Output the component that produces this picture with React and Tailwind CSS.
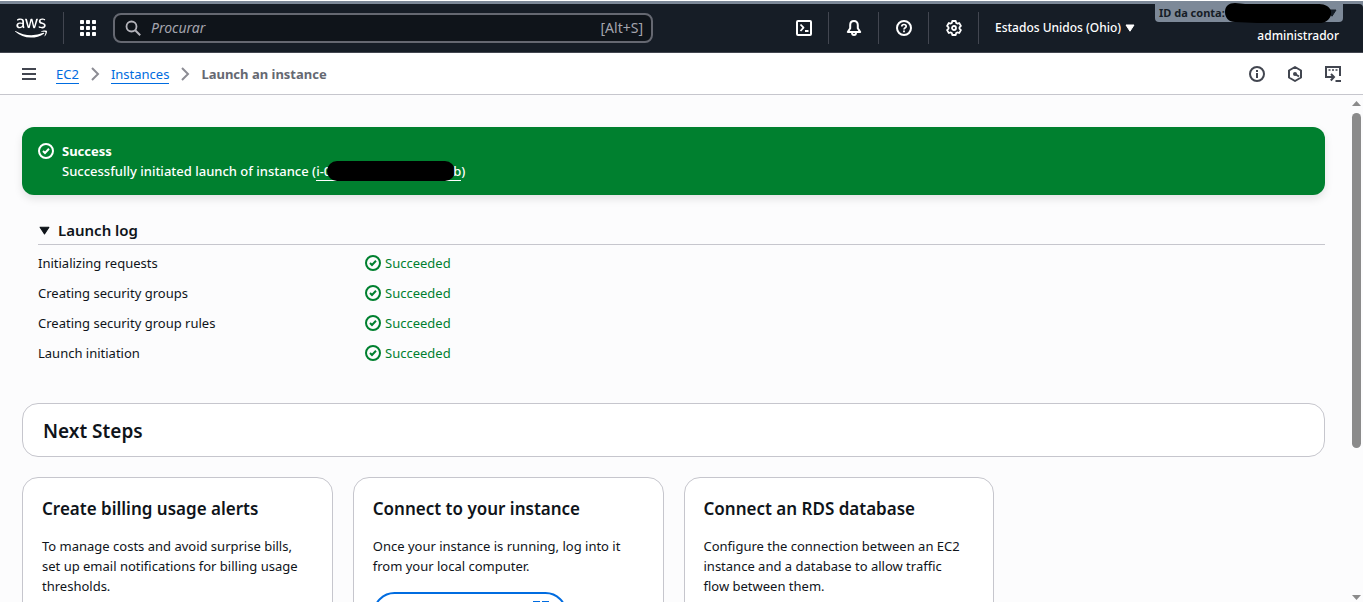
import React from "react";
import { FaAws } from "react-icons/fa";

function Icon({ children, className = "size-4" }) {
  return (
    <svg
      viewBox="0 0 16 16"
      fill="none"
      stroke="currentColor"
      strokeWidth="2"
      strokeLinejoin="round"
      aria-hidden="true"
      className={`${className} shrink-0`}
    >
      {children}
    </svg>
  );
}

const CheckIcon = () => (
  <Icon>
    <circle cx="8" cy="8" r="7" />
    <path d="m5 8 2 2 4-4.2" strokeLinejoin="miter" />
  </Icon>
);

const Caret = ({ className }) => (
  <svg viewBox="0 0 10 8" fill="currentColor" stroke="currentColor" strokeLinejoin="round" aria-hidden="true" className={className}>
    <path d="M1 1h8L5 7.2z" />
  </svg>
);

const ScrollArrow = ({ className }) => (
  <svg viewBox="0 0 9 5" fill="currentColor" aria-hidden="true" className={`h-[5px] w-[9px] ${className}`}>
    <path d="M0 0h9L4.5 5z" />
  </svg>
);

const Chevron = () => (
  <Icon className="size-4 text-[#8c8c94]">
    <path d="m5 2 6 6-6 6" strokeLinejoin="miter" />
  </Icon>
);

const GridIcon = () => (
  <svg viewBox="0 0 16 16" fill="currentColor" aria-hidden="true" className="size-4">
    {[0, 6, 12].map((y) =>
      [0, 6, 12].map((x) => <rect key={`${x}-${y}`} x={x} y={y} width="4" height="4" rx="0.8" />)
    )}
  </svg>
);

const tools = [
  {
    label: "CloudShell",
    icon: (
      <Icon>
        <rect x="1" y="1" width="14" height="14" rx="1" />
        <path d="m4.5 4.5 3 3.2-3 3.3M9 11h3.5" strokeWidth="1.8" />
      </Icon>
    ),
  },
  {
    label: "Notificações",
    icon: (
      <Icon>
        <path d="M8 1C5.6 1 4.2 2.7 4.2 5v3.2L1.8 12h12.4L11.8 8.2V5C11.8 2.7 10.4 1 8 1Z" />
        <path d="M6 12.5c0 1.7 1 2.5 2 2.5s2-.8 2-2.5" />
      </Icon>
    ),
  },
  {
    label: "Ajuda",
    icon: (
      <Icon>
        <circle cx="8" cy="8" r="7" />
        <path d="M5.8 6.5C5.8 5.2 6.7 4.5 8 4.5s2.2.8 2.2 1.9C10.2 7.8 8 7.8 8 9.6" strokeWidth="1.7" />
        <path d="M8 10.6v1.7" strokeWidth="1.8" />
      </Icon>
    ),
  },
  {
    label: "Configurações",
    icon: (
      <Icon>
        <path d="M6.3 1h3.4l.5 2 1 .6 2-.6 1.7 2.9-1.4 1.4v1.400l1.400 1.400-1.700 2.900-2-.6-1 .6-.5 2H6.3l-.5-2-1-.6-2 .6-1.700-2.900 1.400-1.400V7.300L1.100 5.900 2.800 3l2 .6 1-.6z" strokeWidth="1.8" />
        <circle cx="8" cy="8" r="2" strokeWidth="1.8" />
      </Icon>
    ),
  },
];

const steps = ["Initializing requests", "Creating security groups", "Creating security group rules", "Launch initiation"];

const cards = [
  {
    title: "Create billing usage alerts",
    text: "To manage costs and avoid surprise bills, set up email notifications for billing usage thresholds.",
  },
  {
    title: "Connect to your instance",
    text: "Once your instance is running, log into it from your local computer.",
    action: "Connect to instance",
  },
  {
    title: "Connect an RDS database",
    text: "Configure the connection between an EC2 instance and a database to allow traffic flow between them.",
  },
];

function TopBar() {
  return (
    <header className="shrink-0 border-t border-white bg-[#7d8998] pt-[3px] text-white">
      <div className="flex h-[49px] items-center rounded-tr border-b border-[#424650] bg-[#161d26]">
        <a href="#home" aria-label="AWS" className="flex h-8 w-16 shrink-0 items-center border-r border-[#424650] pl-[15px]">
          <FaAws className="h-[26px] w-8" />
        </a>
        <button type="button" aria-label="Serviços" className="flex h-8 w-[49px] shrink-0 items-center pl-4">
          <GridIcon />
        </button>
        <label className="flex h-[30px] w-[540px] min-w-0 items-center gap-2 rounded-lg border-2 border-[#656871] bg-[#0f141a] px-2 text-[#b4b4bb]">
          <span className="flex w-5 justify-center">
            <Icon>
              <circle cx="6.5" cy="6.5" r="5" strokeWidth="1.8" />
              <path d="m10.2 10.2 5 5" />
            </Icon>
          </span>
          <input
            type="search"
            placeholder="Procurar"
            aria-label="Procurar"
            className="min-w-0 flex-1 bg-transparent text-sm outline-none placeholder:text-[#a4a4ad] placeholder:italic"
          />
          <span className="text-sm text-[#a4a4ad]">[Alt+S]</span>
        </label>
        <div className="ml-auto flex shrink-0 items-center">
          {tools.map((tool) => (
            <button
              key={tool.label}
              type="button"
              aria-label={tool.label}
              className="flex h-8 w-[50px] items-center justify-center border-r border-[#424650]"
            >
              {tool.icon}
            </button>
          ))}
          <button type="button" className="flex w-44 items-center gap-1 pl-4 text-xs font-medium">
            Estados Unidos (Ohio)
            <Caret className="h-2 w-2.5" />
          </button>
        </div>
        <button type="button" className="mr-5 flex w-[188px] shrink-0 flex-col items-end self-start text-xs">
          <span className="flex h-[18px] w-full items-center rounded-b bg-[#7d8998] pl-1 text-[11px] font-bold text-[#161d26]">
            ID da conta:
            <span className="flex-1">
              <svg viewBox="0 0 106 22" fill="#000" preserveAspectRatio="none" aria-hidden="true" className="relative -top-0.5 -mb-1 h-[22px] w-full">
                <path d="M0 10C0 4 4 1 10 1l10 1h74c7 0 12 4 12 9s-5 10-12 10l-62 0-22-1C4 20 0 16 0 10Z" />
              </svg>
            </span>
            <Caret className="mr-1.5 -ml-1 h-2 w-2.5" />
          </span>
          <span className="mt-1 mr-1 text-xs leading-5 font-medium">administrador</span>
        </button>
      </div>
    </header>
  );
}

function Breadcrumbs() {
  return (
    <div className="flex h-[42px] shrink-0 items-center border-b border-[#c6c6cd] bg-white pr-[22px] pl-[21px] text-[#424650]">
      <button type="button" aria-label="Open menu" className="mr-[19px]">
        <Icon>
          <path d="M1 3h14M1 8h14M1 13h14" />
        </Icon>
      </button>
      <nav aria-label="Breadcrumb" className="flex items-center gap-2 text-[13px] leading-5">
        <a href="#ec2" className="h-5 border-b border-[#006ce0] text-[#006ce0]">EC2</a>
        <Chevron />
        <a href="#instances" className="h-5 border-b border-[#006ce0] text-[#006ce0]">Instances</a>
        <Chevron />
        <span className="font-bold text-[#656871]">Launch an instance</span>
      </nav>
      <div className="ml-auto flex gap-[22px]">
        <button type="button" aria-label="Info">
          <Icon>
            <circle cx="8" cy="8" r="7" />
            <path d="M8 4v2M8 7v5" />
          </Icon>
        </button>
        <button type="button" aria-label="Amazon Q">
          <Icon>
            <path d="m8 1 6 3.500v7L8 15l-6-3.500v-7z" />
            <circle cx="8" cy="8" r="2" fill="currentColor" stroke="none" />
            <path d="m8 8 4 2.500" />
          </Icon>
        </button>
        <button type="button" aria-label="Console">
          <Icon>
            <path d="M4 11H1V1h14v9" strokeLinejoin="miter" />
            <path d="M3.500 4h2M7 4h2M10.500 4h2" strokeWidth="1.600" />
            <path d="M4 11h4.500M6 8l3 3-3.200 3.500M10.500 15H16" strokeLinejoin="miter" />
          </Icon>
        </button>
      </div>
    </div>
  );
}

function SuccessBanner() {
  return (
    <section
      role="status"
      className="flex gap-2 rounded-xl bg-[#00802f] px-4 py-3.5 text-[13px] leading-5 text-white shadow-[0_4px_8px_rgba(0,7,22,0.1)]"
    >
      <span className="mt-0.5">
        <CheckIcon />
      </span>
      <div>
        <h2 className="font-bold">Success</h2>
        <p className="flex font-medium">
          <span className="whitespace-pre">Successfully initiated launch of instance (</span>
          <a href="#instance" className="flex h-5 border-b border-white">
            i-0
            <span className="-mr-0.5 -ml-1 h-5 w-[128px] rounded-full bg-black" />
            b
          </a>
          )
        </p>
      </div>
    </section>
  );
}

function LaunchLog() {
  return (
    <section className="mt-[25px] pl-4">
      <h2 className="border-b border-[#c6c6cd] pb-1">
        <button type="button" aria-expanded="true" className="flex items-center gap-2 text-[15px] leading-5 font-semibold">
          <Caret className="ml-px h-[9px] w-[11px]" />
          Launch log
        </button>
      </h2>
      <table className="mt-[3px] text-[13px] leading-5">
        <tbody>
          {steps.map((step) => (
            <tr key={step} className="h-[30px]">
              <th scope="row" className="w-[327px] text-left font-normal">{step}</th>
              <td>
                <span className="flex items-center gap-1 text-[#00802f]">
                  <CheckIcon />
                  Succeeded
                </span>
              </td>
            </tr>
          ))}
        </tbody>
      </table>
    </section>
  );
}

function Card({ title, text, action }) {
  return (
    <article className="rounded-2xl border border-[#c6c6cd] bg-white px-[19px] pt-5 pb-5">
      <h3 className="text-[17px] leading-[22px] font-semibold">{title}</h3>
      <p className="mt-4 pr-2 text-[13px] leading-5">{text}</p>
      {action && (
        <button
          type="button"
          className="mt-4 flex items-start gap-1.5 rounded-full border-2 border-[#006ce0] px-4 pt-[7px] pb-1.5 text-sm leading-5 font-semibold text-[#006ce0]"
        >
          <span className="pt-1.5">{action}</span>
          <Icon>
            <path d="M9 1h6v6M15 1 8 8M7 1H1v14h14v-5" strokeLinejoin="miter" />
          </Icon>
        </button>
      )}
    </article>
  );
}

export default function App() {
  return (
    <div className="flex h-screen flex-col overflow-hidden bg-[#fcfcfd] font-['Noto_Sans','Open_Sans',sans-serif] text-[#0f141a]">
      <TopBar />
      <Breadcrumbs />
      <div className="flex min-h-0 flex-1">
        <main className="min-w-0 flex-1 overflow-y-auto pt-8 pr-[25px] pb-8 pl-[22px] [scrollbar-width:none]">
          <SuccessBanner />
          <LaunchLog />
          <section className="mt-[35px] rounded-2xl border border-[#c6c6cd] bg-white px-5 pt-[15px] pb-[13px]">
            <h2 className="text-[19px] leading-6 font-semibold">Next Steps</h2>
          </section>
          <div className="mt-5 grid grid-cols-4 gap-5">
            {cards.map((card) => (
              <Card key={card.title} {...card} />
            ))}
          </div>
        </main>
        <div aria-hidden="true" className="flex w-[13px] shrink-0 flex-col items-center pt-1.5 pb-0.5 text-[#8b8b8b]">
          <ScrollArrow className="rotate-180" />
          <div className="mt-[7px] h-[335px] w-[9px] rounded-full bg-[#8b8b8b]" />
          <ScrollArrow className="mt-auto" />
        </div>
      </div>
    </div>
  );
}
